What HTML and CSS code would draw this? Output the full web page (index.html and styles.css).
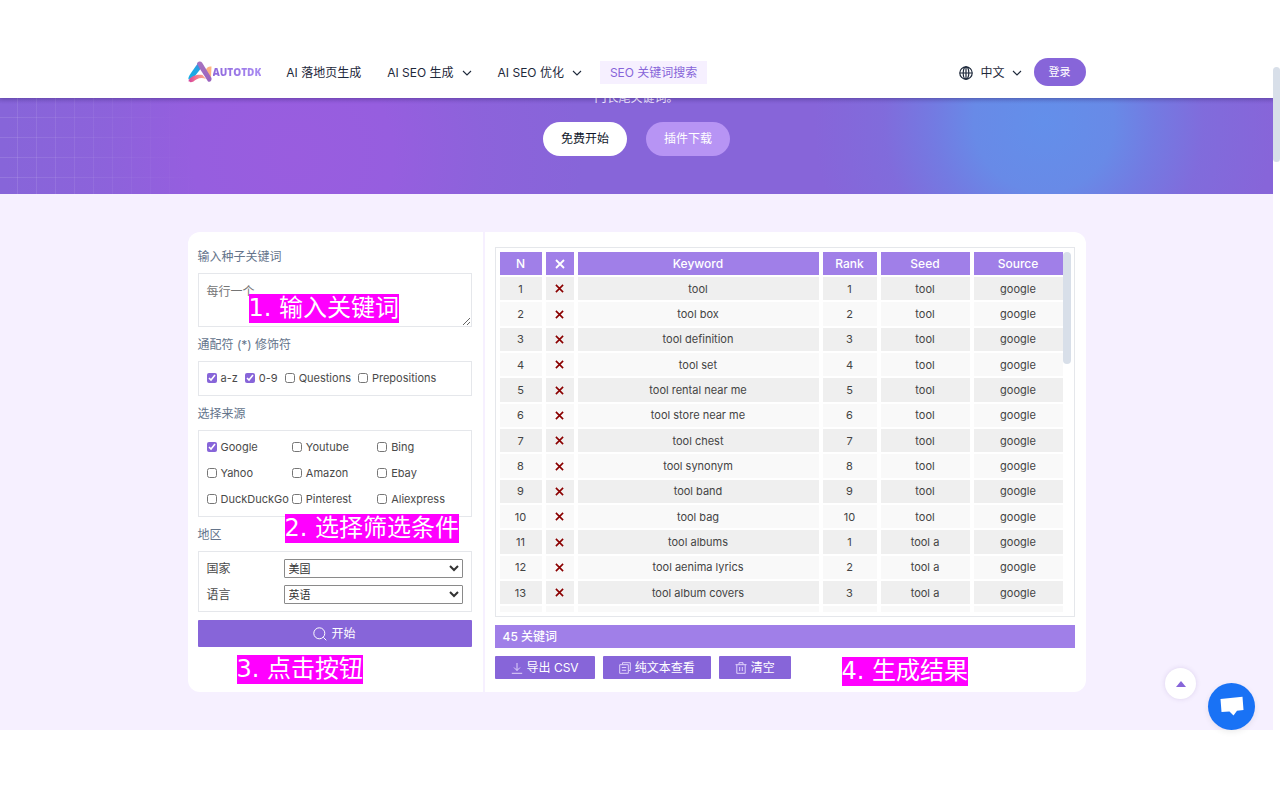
FILE: index.html
```html
<!DOCTYPE html>
<html lang="zh-CN">
<head>
<meta charset="utf-8">
<meta name="viewport" content="width=device-width, initial-scale=1">
<title>AUTOTDK - SEO 关键词搜索</title>
<link rel="stylesheet" href="styles.css">
</head>
<body>
<div class="screen">
  <div class="view">
    <header class="header">
      <div class="container header-row">
        <a class="logo" href="#">
          <svg width="25" height="22" viewBox="0 0 25 22" aria-hidden="true">
            <defs>
              <linearGradient id="lg1" x1="0" y1="1" x2="1" y2="0"><stop offset="0" stop-color="#12b0e6"/><stop offset="0.600" stop-color="#1fa5e4"/><stop offset="1" stop-color="#5a7fd8"/></linearGradient>
              <linearGradient id="lg2" x1="0" y1="0" x2="1" y2="0"><stop offset="0" stop-color="#d0409f"/><stop offset="0.400" stop-color="#f0708f"/><stop offset="1" stop-color="#ffb08a"/></linearGradient>
              <linearGradient id="lg3" x1="0" y1="0" x2="0" y2="1"><stop offset="0" stop-color="#a774c0"/><stop offset="1" stop-color="#9a62be"/></linearGradient>
            </defs>
            <path d="M18 8.500c1-2.500 3-3.500 5.500-3L23 16l-2 1z" fill="#ffb482"/>
            <path d="M10 2 14 6 7 15 0.500 18.500C0 17 1 15 3 12z" fill="url(#lg1)"/>
            <path d="M0.500 20C1.500 16 8 13 14.500 14L18 18C12 15.500 8 18.500 5.500 20.500 3.500 21.500 1 21.500 0.500 20z" fill="url(#lg2)"/>
            <path d="M9 2.500C10 0 13 0 14 1.500L23.500 17C24 20 22 21.500 20 20.500L12 8z" fill="url(#lg3)"/>
          </svg>
          <span class="logo-text">AUTOTDK</span>
        </a>
        <nav class="nav">
          <a href="#">AI 落地页生成</a>
          <a href="#">AI SEO 生成 <svg class="chev" viewBox="0 0 10 6"><path d="M1 1l4 4 4-4"/></svg></a>
          <a href="#">AI SEO 优化 <svg class="chev" viewBox="0 0 10 6"><path d="M1 1l4 4 4-4"/></svg></a>
          <a class="active" href="#">SEO 关键词搜索</a>
        </nav>
        <div class="account">
          <button class="lang" type="button">
            <svg class="globe" viewBox="0 0 14 14"><circle cx="7" cy="7" r="6.200"/><ellipse cx="7" cy="7" rx="2.800" ry="6.200"/><path d="M7 .8v12.400M.8 7h12.400"/></svg>
            <span>中文</span>
            <svg class="chev" viewBox="0 0 10 6"><path d="M1 1l4 4 4-4"/></svg>
          </button>
          <button class="login" type="button">登录</button>
        </div>
      </div>
    </header>

    <section class="hero">
      <p class="hero-text">门长尾关键词。</p>
      <div class="hero-actions">
        <a class="pill pill-light" href="#">免费开始</a>
        <a class="pill pill-soft" href="#">插件下载</a>
      </div>
    </section>

    <main class="main">
      <div class="container card">
        <form class="filters">
          <label class="title" for="seeds">输入种子关键词</label>
          <textarea id="seeds" class="seeds" placeholder="每行一个"></textarea>
          <h2 class="title">通配符 (*) 修饰符</h2>
          <div class="box modifiers">
            <label><input type="checkbox" checked>a-z</label>
            <label><input type="checkbox" checked>0-9</label>
            <label><input type="checkbox">Questions</label>
            <label><input type="checkbox">Prepositions</label>
          </div>
          <h2 class="title">选择来源</h2>
          <div class="box sources">
            <label><input type="checkbox" checked>Google</label>
            <label><input type="checkbox">Youtube</label>
            <label><input type="checkbox">Bing</label>
            <label><input type="checkbox">Yahoo</label>
            <label><input type="checkbox">Amazon</label>
            <label><input type="checkbox">Ebay</label>
            <label><input type="checkbox">DuckDuckGo</label>
            <label><input type="checkbox">Pinterest</label>
            <label><input type="checkbox">Aliexpress</label>
          </div>
          <h2 class="title">地区</h2>
          <div class="box region">
            <label for="country">国家</label>
            <select id="country"><option>美国</option></select>
            <label for="language">语言</label>
            <select id="language"><option>英语</option></select>
          </div>
          <button class="btn start" type="button">
            <svg class="ico ico-lg" viewBox="0 0 14 14"><circle cx="6.300" cy="6.300" r="5.500"/><path d="M10.300 10.300l3 3"/></svg>开始
          </button>
        </form>

        <section class="results">
          <div class="table-box">
            <div class="table-clip">
              <table>
                <colgroup><col class="c-n"><col class="c-x"><col><col class="c-rank"><col class="c-wide"><col class="c-wide"></colgroup>
                <thead>
                  <tr><th>N</th><th><svg class="cross" viewBox="0 0 10 10"><path d="M1 1l8 8M9 1L1 9"/></svg></th><th>Keyword</th><th>Rank</th><th>Seed</th><th>Source</th></tr>
                </thead>
                <tbody id="rows"></tbody>
              </table>
            </div>
            <div class="table-thumb"></div>
          </div>
          <div class="count">45 关键词</div>
          <div class="actions">
            <button class="btn" type="button"><svg class="ico" viewBox="0 0 12 12"><path d="M6 1v7.500M3 5.500l3 3 3-3M.8 11.300h10.400"/></svg>导出 CSV</button>
            <button class="btn" type="button"><svg class="ico" viewBox="0 0 12 12"><path d="M3.500 2.500V.7h7.800v7.800H9.500M.7 2.700h8.600v8.600H.7zM2.800 5.500h4.400M2.800 8.300h4.400"/></svg>纯文本查看</button>
            <button class="btn" type="button"><svg class="ico" viewBox="0 0 12 12"><path d="M.5 2.700h11M4 2.500V.7h4v1.800M1.800 2.700v8.600h8.400V2.700M4.700 5v4M7.300 5v4"/></svg>清空</button>
          </div>
        </section>

        <span class="note note-1">1. 输入关键词</span>
        <span class="note note-2">2. 选择筛选条件</span>
        <span class="note note-3">3. 点击按钮</span>
        <span class="note note-4">4. 生成结果</span>
      </div>
      <button class="to-top" type="button" aria-label="返回顶部"><svg width="10" height="6" viewBox="0 0 10 6"><path d="M5 0l5 6H0z" fill="#8765d9"/></svg></button>
      <button class="chat" type="button" aria-label="在线客服"><svg width="24" height="21" viewBox="0 0 24 21"><path d="M.5 3 22.500.8 23.500 14l-6.500.8-3.500 4.700-4-4L1.500 16z" fill="#fff"/></svg></button>
    </main>
  </div>
  <div class="scrollbar"><div class="scroll-thumb"></div></div>
</div>
<script src="script.js"></script>
</body>
</html>
```
FILE: styles.css
```css
* { box-sizing: border-box; }

body {
  margin: 0;
  background: #fff;
  color: #1e293b;
  font-family: Inter, "Noto Sans CJK SC", sans-serif;
  font-size: 12px;
  line-height: 18px;
}

a { color: inherit; text-decoration: none; }
button { font: inherit; border: 0; cursor: pointer; }
h2, p { margin: 0; }

.screen { display: flex; padding: 46px 0 70px; }
.view { flex: 1; min-width: 0; }
.container { max-width: 898px; margin: 0 auto; }

.scrollbar { width: 7px; padding-top: 21px; }
.scroll-thumb { height: 95px; border-radius: 4px; background: #d8dfe9; }

/* Header */
.header {
  position: relative;
  z-index: 1;
  background: #fff;
  box-shadow: 0 1px 4px rgba(40, 20, 90, .3);
  clip-path: inset(0 0 -8px);
}
.header-row { display: flex; align-items: center; height: 52px; }
.logo { display: flex; align-items: center; }
.logo-text {
  font: 800 10px/12px "Open Sans", sans-serif;
  background: linear-gradient(90deg, #8f68dc, #a98bf2);
  background-clip: text;
  -webkit-background-clip: text;
  color: transparent;
}
.nav { display: flex; align-items: center; gap: 26px; margin-left: 25px; padding-top: 1px; }
.nav a { display: flex; align-items: center; gap: 8px; white-space: nowrap; }
.nav .active { margin-left: -8px; padding: 3px 10px 2px; background: #f6f0ff; color: #8765d9; }
.chev { width: 10px; height: 6px; fill: none; stroke: #1e293b; stroke-width: 1.1; }
.account { display: flex; align-items: center; gap: 12px; margin-left: auto; }
.lang { display: flex; align-items: center; gap: 7px; padding: 1px 0 0; background: none; color: inherit; }
.globe { width: 14px; height: 14px; fill: none; stroke: #1e293b; stroke-width: 1.2; }
.login { padding: 5px 15px; border-radius: 14px; background: #8765d9; color: #fff; font-size: 11px; }

/* Hero */
.hero {
  position: relative;
  overflow: hidden;
  padding-bottom: 38px;
  text-align: center;
  color: #f1eaff;
  background:
    linear-gradient(180deg, rgba(60, 40, 120, .15), transparent 6px),
    radial-gradient(circle at 82% 25%, #638fea 0, #688ae7 70px, rgba(110, 128, 228, .8) 110px, rgba(122, 114, 222, .5) 160px, rgba(135, 101, 217, 0) 230px),
    radial-gradient(circle at 23% 60%, #995ddf 0, #965edf 100px, rgba(144, 97, 220, .6) 190px, rgba(135, 101, 217, 0) 290px),
    #8765d9;
}
.hero::before {
  content: "";
  position: absolute;
  inset: 0 auto 0 0;
  width: 220px;
  background:
    repeating-linear-gradient(90deg, transparent 0 17px, rgba(255, 255, 255, .12) 17px 18px, transparent 18px 19px),
    repeating-linear-gradient(180deg, transparent 0 19px, rgba(255, 255, 255, .12) 19px 20px);
  mask-image: linear-gradient(75deg, #000, transparent 85%);
}
.hero-text { margin-top: -9px; }
.hero-actions { display: flex; justify-content: center; gap: 19px; margin-top: 15px; }
.pill { padding: 8px 18px; border-radius: 17px; }
.pill-light { background: #fff; color: #0f172a; }
.pill-soft { background: #b794f4; color: #fff; }

/* Card */
.main { position: relative; padding: 38px 0; background: #f6f0ff; }
.card { position: relative; display: flex; border-radius: 12px; background: #fff; }
.filters {
  display: flex;
  flex-direction: column;
  gap: 8px;
  flex: 0 0 297px;
  padding: 15px 11px 45px 10px;
  border-right: 2px solid #f6f0ff;
}
.title { padding-top: 2px; color: #64748b; font-size: 12px; font-weight: 400; line-height: 16px; }
.box, .seeds { border: 1px solid #e5e7eb; }
.seeds {
  display: block;
  width: 100%;
  height: 54px;
  padding: 9px 8px;
  font: inherit;
  resize: vertical;
}
.seeds::placeholder { color: #757575; }
.box { padding: 7px 8px 8px; color: #4a4a4a; font-size: 11px; }
.box label { display: flex; align-items: center; gap: 4px; white-space: nowrap; }
.box input { width: 10px; height: 10px; margin: 0; accent-color: #8765d9; }
.modifiers { display: flex; gap: 7px; }
.sources { display: grid; grid-template-columns: repeat(3, 1fr); gap: 8px 0; }
.sources label { height: 18px; min-width: 0; }
.region { display: grid; grid-template-columns: 77px 1fr; align-items: center; gap: 7px 0; padding: 7px 8px; }
.region label { font-size: 12px; }
.region select {
  height: 19px;
  padding: 0;
  border: 1px solid #8a8a8a;
  border-radius: 1px;
  background: #fff;
  color: #333;
  font: inherit;
}

.btn {
  display: flex;
  align-items: center;
  justify-content: center;
  gap: 4px;
  padding: 0 16px;
  height: 23px;
  border-radius: 1px;
  background: #8765d9;
  color: #fff;
  white-space: nowrap;
}
.start { height: 27px; }
.ico { width: 12px; height: 12px; fill: none; stroke: #e0d3fb; stroke-width: 1; }
.ico-lg { width: 14px; height: 14px; stroke: #fff; }

/* Results */
.results { flex: 1; min-width: 0; padding: 15px 11px 13px 10px; }
.table-box { position: relative; padding: 2px 7px 4px 0; border: 1px solid #e5e7eb; }
.table-clip { height: 362px; overflow: hidden; }
table {
  width: 100%;
  height: 382px;
  table-layout: fixed;
  border-collapse: separate;
  border-spacing: 4px 2px;
  font-size: 11px;
  color: #444;
}
.c-n { width: 42px; }
.c-x { width: 28px; }
.c-rank { width: 54px; }
.c-wide { width: 89px; }
th, td { padding: 0; text-align: center; line-height: 18px; }
th { height: 23px; background: #a07fe8; color: #fff; font-size: 12px; font-weight: 500; }
td { height: 23px; }
tbody tr:nth-child(odd) td { background: #efefef; }
tbody tr:nth-child(even) td { background: #f9f9f9; }
.cross { display: block; width: 10px; height: 10px; margin: 0 auto; fill: none; stroke: #fff; stroke-width: 1.8; }
td .cross { width: 9px; height: 9px; stroke: #8b0000; }
.table-thumb { position: absolute; top: 4px; right: 3px; width: 8px; height: 112px; border-radius: 4px; background: #d8dfe9; }
.count { margin-top: 8px; padding: 3px 8px 2px; background: #a07fe8; color: #fff; font-weight: 500; }
.actions { display: flex; gap: 8px; margin-top: 8px; }

/* Step notes over the card */
.note {
  position: absolute;
  background: #f0f;
  color: #fff;
  font: 24px/29px "DejaVu Sans", "Noto Sans CJK SC", sans-serif;
  white-space: nowrap;
}
.note-1 { left: 61px; top: 62px; }
.note-2 { left: 97px; top: 282px; }
.note-3 { left: 49px; top: 423px; }
.note-4 { left: 654px; top: 425px; }

/* Floating buttons */
.to-top, .chat { position: absolute; display: flex; align-items: center; justify-content: center; padding: 0; border-radius: 50%; }
.to-top { right: 77px; bottom: 31px; width: 31px; height: 31px; background: #fff; box-shadow: 0 0 5px rgba(80, 50, 140, .15); }
.chat { right: 18px; bottom: 0; width: 47px; height: 47px; background: #1972f5; box-shadow: 0 2px 6px rgba(0, 0, 0, .08); }
```
FILE: script.js
```js
const rows = [
  ["tool", 1, "tool"],
  ["tool box", 2, "tool"],
  ["tool definition", 3, "tool"],
  ["tool set", 4, "tool"],
  ["tool rental near me", 5, "tool"],
  ["tool store near me", 6, "tool"],
  ["tool chest", 7, "tool"],
  ["tool synonym", 8, "tool"],
  ["tool band", 9, "tool"],
  ["tool bag", 10, "tool"],
  ["tool albums", 1, "tool a"],
  ["tool aenima lyrics", 2, "tool a"],
  ["tool album covers", 3, "tool a"]
];
const cross = '<svg class="cross" viewBox="0 0 10 10"><path d="M1 1l8 8M9 1L1 9"/></svg>';
document.getElementById("rows").innerHTML = rows
  .map(([keyword, rank, seed], i) =>
    `<tr><td>${i + 1}</td><td>${cross}</td><td>${keyword}</td><td>${rank}</td><td>${seed}</td><td>google</td></tr>`)
  .join("") + "<tr><td></td><td></td><td></td><td></td><td></td><td></td></tr>";
```
